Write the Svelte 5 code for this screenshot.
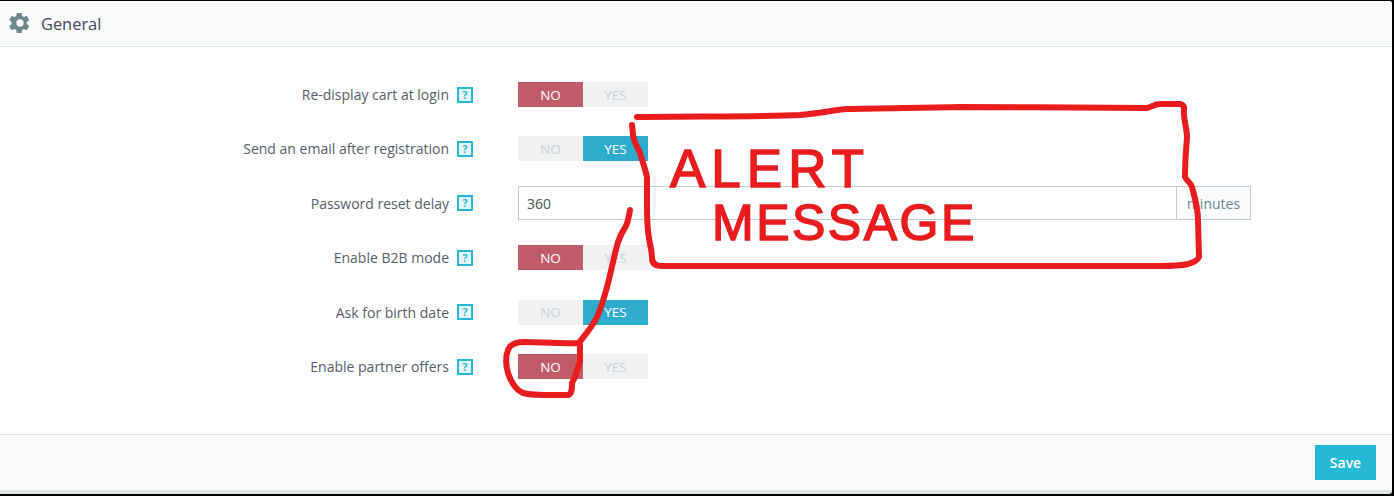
<script>
  const rows = [
    { label: 'Re-display cart at login', type: 'switch', value: false },
    { label: 'Send an email after registration', type: 'switch', value: true },
    { label: 'Password reset delay', type: 'input', value: '360', suffix: 'minutes' },
    { label: 'Enable B2B mode', type: 'switch', value: false },
    { label: 'Ask for birth date', type: 'switch', value: true },
    { label: 'Enable partner offers', type: 'switch', value: false }
  ]

  // hand drawn marks on top of the screenshot
  const strokes = [
    'M637 117 C690 116 760 117 800 115 C820 113 835 110 847 109 C880 108 920 108 960 107 C1020 107 1100 108 1147 108 C1152 107 1154 104 1160 104 L1180 104 Q1185 105 1184 110 C1183 118 1187 128 1187 137 C1186 150 1185 165 1185 177 C1187 181 1191 183 1192 187 C1195 198 1198 208 1198 220 L1199 257 C1197 262 1193 262 1188 264 C1180 266 1172 266 1160 266 L662 266 C656 266 652 264 652 258 C652 252 650 245 649 238 C647 228 647 218 647 205 L647 177 C645 168 642 160 640 153 C637 146 633 140 633 134 L632 125',
    'M630 210 C629 216 628 221 626 226 C622 232 620 236 618 242 C614 256 611 272 607 287 C604 298 601 308 597 317 C592 327 585 335 579 343 C560 344 540 342 525 342 C516 342 510 344 508 350 C505 358 506 366 508 373 C511 382 516 390 523 393 C535 396 555 395 568 395 C572 394 572 389 572 383 C576 376 578 368 580 360 L580 345'
  ]
</script>

<div class="page">
  <div class="panel">
    <header class="panel__head">
      <svg class="panel__gear" viewBox="0 0 24 24" aria-hidden="true">
        <path d="M19.4 13.2c.1-.4.1-.8.1-1.2s0-.8-.1-1.2l2.3-1.8c.2-.2.3-.5.1-.7l-2.2-3.8c-.1-.2-.4-.3-.7-.2l-2.7 1.1c-.6-.4-1.2-.8-1.9-1l-.4-2.9c0-.3-.3-.5-.5-.5H9c-.3 0-.5.2-.6.5L8 4.400c-.7.3-1.300.6-1.900 1L3.400 4.300c-.3-.1-.5 0-.7.2L.5 8.300c-.1.2-.1.5.1.7l2.300 1.800c0 .4-.1.8-.1 1.200s0 .8.1 1.200L.6 15c-.2.2-.3.5-.1.7l2.200 3.800c.1.2.4.3.7.2l2.700-1.100c.6.4 1.200.8 1.900 1l.4 2.900c.1.3.3.5.6.5h4.400c.3 0 .5-.2.500-.5l.4-2.900c.7-.3 1.300-.6 1.900-1l2.700 1.100c.3.1.5 0 .7-.2l2.200-3.800c.1-.2.1-.5-.1-.7zM12 16a4 4 0 1 1 0-8 4 4 0 0 1 0 8z" />
      </svg>
      <span>General</span>
    </header>

    <div class="panel__body">
      {#each rows as row}
        <div class="row" class:row--input={row.type === 'input'}>
          <div class="row__label">
            <span>{row.label}</span>
            <span class="help">?</span>
          </div>
          {#if row.type === 'switch'}
            <div class="switch">
              <span class="switch__opt" class:switch__opt--no={!row.value}>NO</span>
              <span class="switch__opt" class:switch__opt--yes={row.value}>YES</span>
            </div>
          {:else}
            <div class="field">
              <span class="field__value">{row.value}</span>
              <span class="field__suffix">{row.suffix}</span>
            </div>
          {/if}
        </div>
      {/each}
    </div>

    <footer class="panel__foot">
      <button class="save">Save</button>
    </footer>
  </div>

  <svg class="marks" viewBox="0 0 1394 496" aria-hidden="true">
    {#each strokes as d}
      <path {d} />
    {/each}
    <text class="marks__text" x="670" y="187" font-size="53" letter-spacing="6">ALERT</text>
    <text class="marks__text" x="712" y="240" font-size="50" letter-spacing="2.500">MESSAGE</text>
  </svg>
</div>

<style>
  :global(body) {
    margin: 0;
    background: #000;
  }

  .page {
    position: relative;
    width: 1394px;
    height: 496px;
    padding: 1px 2px 2px 0;
    box-sizing: border-box;
    overflow: hidden;
    font-family: "Open Sans", sans-serif;
    color: #363a41;
  }

  .panel {
    height: 100%;
    box-sizing: border-box;
    display: flex;
    flex-direction: column;
    background: #fff;
    border-bottom: 4px solid #e1e7e9;
    border-radius: 0 3px 3px 0;
    overflow: hidden;
  }

  .panel__head {
    height: 45px;
    flex-shrink: 0;
    display: flex;
    align-items: center;
    gap: 10px;
    padding-left: 9px;
    background: #fafbfc;
    border-bottom: 1px solid #dde6ea;
    font-size: 16.400px;
    color: #3f4a56;
  }

  .panel__gear {
    width: 22px;
    height: 22px;
    margin-top: -2px;
    fill: #6c868e;
  }

  .panel__body {
    flex: 1;
    padding-top: 35px;
    display: flex;
    flex-direction: column;
    gap: 29.4px;
  }

  .row {
    display: flex;
    height: 25px;
    align-items: center;
  }

  .row--input {
    height: 34px;
    margin: -4.400px 0;
  }

  .row__label {
    width: 473px;
    flex-shrink: 0;
    display: flex;
    justify-content: flex-end;
    align-items: center;
    gap: 8px;
    font-size: 14px;
    color: #555f6a;
  }

  .help {
    width: 12px;
    height: 12px;
    display: flex;
    align-items: center;
    justify-content: center;
    border: 2px solid #25b9d7;
    background: #e5f6fa;
    color: #25b9d7;
    font-size: 10.500px;
    font-weight: 700;
  }

  .switch {
    margin-left: 45px;
    display: flex;
    width: 130px;
    height: 25px;
  }

  .switch__opt {
    width: 65px;
    display: flex;
    align-items: center;
    justify-content: center;
    background: #eff1f2;
    color: #c7d3da;
    font-size: 13.500px;
  }

  .switch__opt--no {
    background: #c05c67;
    color: #fff;
  }

  .switch__opt--yes {
    background: #2eacce;
    color: #fff;
  }

  .field {
    margin-left: 45px;
    width: 733px;
    height: 34px;
    box-sizing: border-box;
    display: flex;
    border: 1px solid #bbcdd2;
    font-size: 14px;
  }

  .field__value {
    flex: 1;
    display: flex;
    align-items: center;
    padding-left: 8px;
    color: #4a5560;
  }

  .field__suffix {
    width: 73px;
    display: flex;
    align-items: center;
    justify-content: center;
    border-left: 1px solid #bbcdd2;
    background: #fafbfc;
    color: #6c868e;
  }

  .panel__foot {
    height: 55px;
    flex-shrink: 0;
    display: flex;
    justify-content: flex-end;
    align-items: center;
    padding-right: 16px;
    background: #fafbfc;
    border-top: 1px solid #dde6ea;
  }

  .save {
    width: 61px;
    height: 35px;
    border: 0;
    padding: 0;
    background: #25b9d7;
    color: #fff;
    font-family: inherit;
    font-size: 14px;
    font-weight: 600;
  }

  .marks {
    position: absolute;
    inset: 0;
    width: 1394px;
    height: 496px;
    pointer-events: none;
  }

  .marks path {
    fill: none;
    stroke: #e81c1c;
    stroke-width: 6;
    stroke-linecap: round;
    stroke-linejoin: round;
  }

  .marks__text {
    fill: #e81c1c;
    stroke: #e81c1c;
    stroke-width: 1.500;
    font-family: "Liberation Sans", sans-serif;
  }
</style>
